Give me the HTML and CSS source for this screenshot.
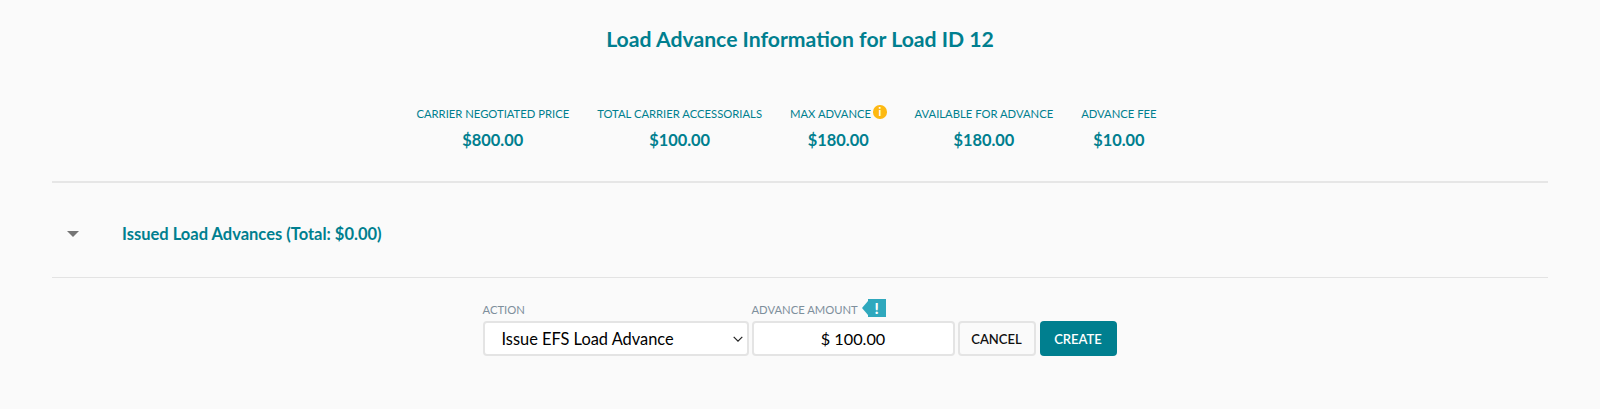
FILE: index.html
```html
<!DOCTYPE html>
<html lang="en">
<head>
<meta charset="utf-8">
<title>Load Advance Information</title>
<link rel="stylesheet" href="styles.css">
</head>
<body>
<main class="page">
  <h1 class="title">Load Advance Information for Load ID 12</h1>
  <section class="stats">
    <div class="stat"><div class="stat-label">CARRIER NEGOTIATED PRICE</div><div class="stat-value">$800.00</div></div>
    <div class="stat"><div class="stat-label">TOTAL CARRIER ACCESSORIALS</div><div class="stat-value">$100.00</div></div>
    <div class="stat"><div class="stat-label">MAX ADVANCE<span class="info">i</span></div><div class="stat-value">$180.00</div></div>
    <div class="stat"><div class="stat-label">AVAILABLE FOR ADVANCE</div><div class="stat-value">$180.00</div></div>
    <div class="stat"><div class="stat-label">ADVANCE FEE</div><div class="stat-value">$10.00</div></div>
  </section>
  <section class="issued">
    <span class="caret"></span>
    <h2 class="issued-title">Issued Load Advances (Total: $0.00)</h2>
  </section>
  <form class="form">
    <div class="field field-action">
      <label class="field-label" for="action">ACTION</label>
      <div class="select-wrap">
        <select class="control select" id="action"><option>Issue EFS Load Advance</option></select>
        <svg class="chevron" width="10" height="6" viewBox="0 0 10 6"><path d="M.7.8 5 5.1 9.3.8" fill="none" stroke="#222" stroke-width="1.2"/></svg>
      </div>
    </div>
    <div class="field field-amount">
      <label class="field-label" for="amount">ADVANCE AMOUNT<span class="flag">!</span></label>
      <input class="control amount" id="amount" value="$ 100.00">
    </div>
    <button class="btn btn-cancel" type="button">CANCEL</button>
    <button class="btn btn-create" type="button">CREATE</button>
  </form>
</main>
</body>
</html>
```
FILE: styles.css
```css
* { box-sizing: border-box; }
html, body { margin: 0; height: 100%; }
body { background: #fafafa; font-family: Lato, sans-serif; color: #007f8f; }
.page { padding: 0 52px; }
.title { margin: 0; padding-top: 26px; height: 102px; font-size: 21.2px; line-height: 26px; font-weight: 700; text-align: center; }
.stats { display: flex; justify-content: center; height: 81px; padding-left: 1px; border-bottom: 2px solid #e6e6e6; }
.stat { margin-right: 28px; text-align: center; }
.stat-label { display: flex; justify-content: center; height: 26px; font-size: 11.25px; line-height: 24px; white-space: nowrap; }
.info { width: 13.5px; height: 13.5px; margin: 3px 0 0 2px; border-radius: 50%; background: #fdb913; color: #fff; font-size: 11px; line-height: 13.5px; font-weight: 700; }
.stat-value { font-size: 16.4px; line-height: 24px; font-weight: 700; }
.issued { display: flex; align-items: center; height: 95px; border-bottom: 1px solid #e3e3e3; padding: 7px 0 0 15px; }
.caret { width: 0; height: 0; border-left: 6px solid transparent; border-right: 6px solid transparent; border-top: 6px solid #757575; }
.issued-title { margin: 0 0 0 43px; font-size: 16.5px; font-weight: 700; line-height: 20px; }
.form { display: flex; align-items: flex-end; justify-content: center; gap: 3px; padding-top: 21px; margin-left: -1px; }
.field { display: flex; flex-direction: column; }
.field-action { width: 266px; }
.field-amount { width: 203px; }
.field-label { display: flex; align-items: center; height: 22px; padding-bottom: 1px; color: #7e8f9c; font-size: 11.25px; line-height: 18px; white-space: nowrap; }
.control { height: 35px; border: 2px solid #e4e4e4; border-radius: 4px; background: #fff; color: #000; font-family: Lato, sans-serif; font-size: 16.25px; }
.select-wrap { position: relative; }
.select { width: 100%; padding: 0 0 0 17px; font-size: 16.4px; appearance: none; -webkit-appearance: none; }
.chevron { position: absolute; right: 6px; top: 15px; pointer-events: none; }
.amount { width: 100%; text-align: center; outline: none; }
.flag { position: relative; width: 18px; height: 18px; margin: -4px 0 0 10px; background: #2fa8bd; color: #fff; font-size: 15px; font-weight: 900; line-height: 18px; text-align: center; }
.flag::before { content: ""; position: absolute; left: -6px; top: 2px; border-top: 7px solid transparent; border-bottom: 7px solid transparent; border-right: 6px solid #2fa8bd; }
.btn { height: 35px; border-radius: 4px; font-family: Lato, sans-serif; font-size: 13px; font-weight: 600; padding: 0; }
.btn-cancel { width: 78px; border: 2px solid #e4e4e4; background: #fafafa; color: #111; }
.btn-create { width: 77px; margin-left: 1px; border: 0; background: #007f8f; color: #fff; }
```
